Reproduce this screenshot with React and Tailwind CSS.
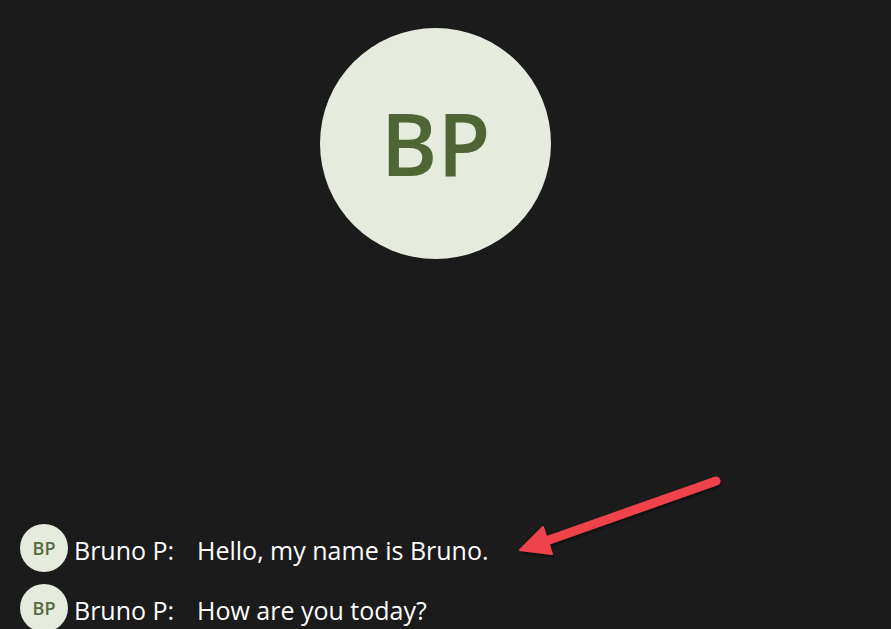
const messages = [
  { id: 1, name: 'Bruno P:', text: 'Hello, my name is Bruno.' },
  { id: 2, name: 'Bruno P:', text: 'How are you today?' },
];

function Avatar({ size = 'sm' }) {
  if (size === 'lg') {
    return (
      <div className="w-[231px] h-[231px] rounded-full bg-[#e5ecdd] flex items-center justify-center">
        <span className="text-[86px] leading-none font-semibold text-[#4f6634] pb-[2px]">BP</span>
      </div>
    );
  }
  return (
    <div className="w-[48px] h-[48px] shrink-0 rounded-full bg-[#e5ecdd] flex items-center justify-center">
      <span className="text-[18px] leading-none font-semibold text-[#566b3d]">BP</span>
    </div>
  );
}

export default function App() {
  return (
    <div
      className="relative w-[891px] h-[629px] overflow-hidden bg-[#1b1b1b] text-white"
      style={{ fontFamily: '"Open Sans", "Noto Sans", sans-serif' }}
    >
      <div className="pl-[320px] pt-[28px]">
        <Avatar size="lg" />
      </div>

      <div className="mt-[265px] pl-[20px] flex flex-col gap-[12px]">
        {messages.map((m) => (
          <div key={m.id} className="flex items-center gap-[6px]">
            <Avatar />
            <span className="text-[25px] leading-none w-[117px] pt-[5px]">{m.name}</span>
            <span className="text-[25px] leading-none pt-[5px]">{m.text}</span>
          </div>
        ))}
      </div>

      <svg className="absolute left-0 top-0 pointer-events-none" width="891" height="629">
        <defs>
          <filter id="sh" x="-20%" y="-20%" width="140%" height="140%">
            <feDropShadow dx="1" dy="2" stdDeviation="1.5" floodColor="#000" floodOpacity="0.5" />
          </filter>
        </defs>
        <g filter="url(#sh)" fill="#f0434b" stroke="#f0434b">
          <line x1="716" y1="481" x2="546" y2="541" strokeWidth="9" strokeLinecap="round" />
          <polygon points="520,550 543,527 552,554" strokeWidth="2" strokeLinejoin="round" />
        </g>
      </svg>
    </div>
  );
}
